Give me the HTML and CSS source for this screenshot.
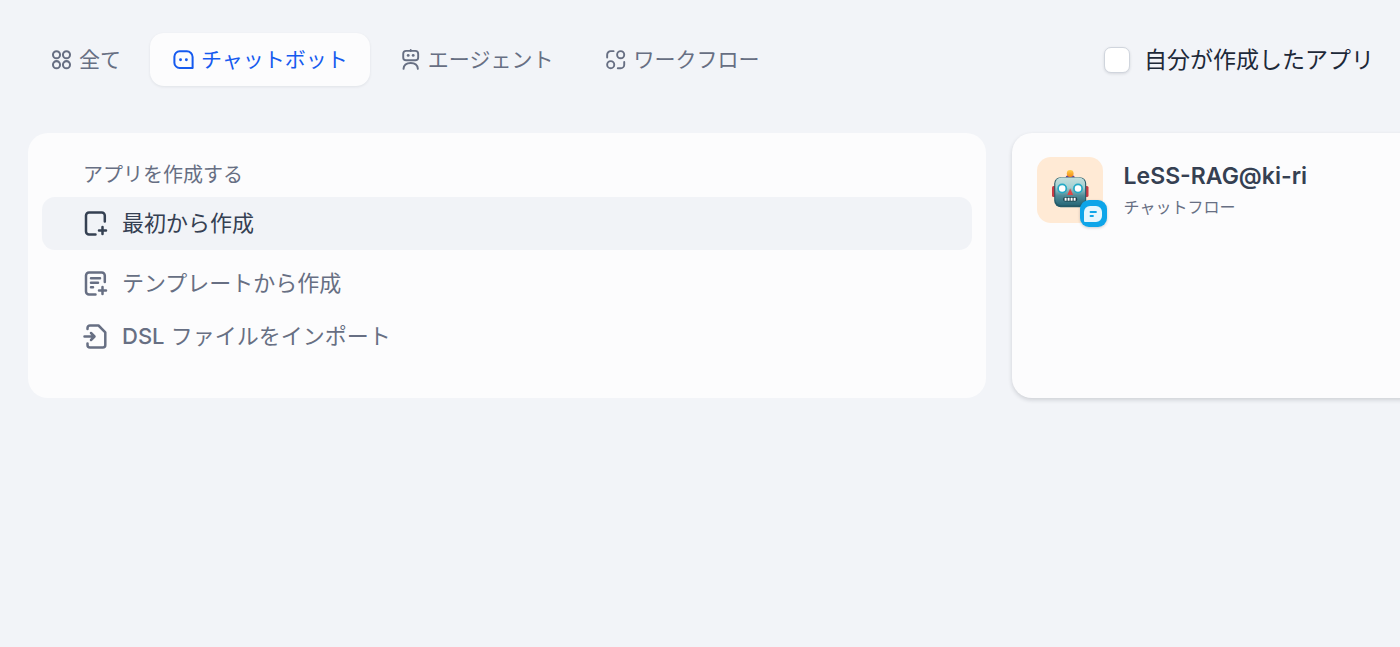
FILE: index.html
```html
<!DOCTYPE html>
<html lang="ja">
<head>
<meta charset="utf-8">
<meta name="viewport" content="width=device-width, initial-scale=1">
<title>アプリ</title>
<link rel="stylesheet" href="styles.css">
</head>
<body>
<div class="page">
  <header class="toolbar">
    <nav class="tabs">
      <button type="button" class="tab">
        <svg class="tab-icon" viewBox="0 0 24 24" fill="none" stroke="currentColor" stroke-width="2.1"><circle cx="6.8" cy="7" r="3.7"/><circle cx="17.2" cy="7" r="3.7"/><circle cx="6.8" cy="17.4" r="3.7"/><circle cx="17.2" cy="17.4" r="3.7"/></svg>
        <span>全て</span>
      </button>
      <button type="button" class="tab tab-active" aria-current="page">
        <svg class="tab-icon" viewBox="0 0 24 24" fill="none" stroke="currentColor" stroke-width="2.1"><path d="M8 3.5h7.500a6 6 0 0 1 6 6V20.800H8a5.500 5.500 0 0 1-5.500-5.500V9A5.500 5.500 0 0 1 8 3.500Z" stroke-linejoin="round"/><circle cx="8.900" cy="12.200" r="1.500" fill="currentColor" stroke="none"/><circle cx="15" cy="12.200" r="1.500" fill="currentColor" stroke="none"/></svg>
        <span>チャットボット</span>
      </button>
      <button type="button" class="tab">
        <svg class="tab-icon" viewBox="0 0 24 24" fill="none" stroke="currentColor" stroke-width="2" stroke-linecap="round"><path d="M12.200 2v1.200"/><rect x="4.400" y="3" width="15.600" height="9.800" rx="3"/><circle cx="9.600" cy="7.700" r="1.500" fill="currentColor" stroke="none"/><circle cx="14.800" cy="7.700" r="1.500" fill="currentColor" stroke="none"/><path d="M4.700 21.800c.3-4 3.300-6.200 7.500-6.200s7.200 2.200 7.500 6.200"/></svg>
        <span>エージェント</span>
      </button>
      <button type="button" class="tab">
        <svg class="tab-icon" viewBox="0 0 24 24" fill="none" stroke="currentColor" stroke-width="2" stroke-linecap="round"><circle cx="17.400" cy="7" r="3.700"/><circle cx="7" cy="17.400" r="3.700"/><path d="M3.300 10V7A3.700 3.700 0 0 1 7 3.300h3M21.100 14.500v2.900a3.700 3.700 0 0 1-3.700 3.700h-3"/></svg>
        <span>ワークフロー</span>
      </button>
    </nav>
    <label class="mine">
      <input type="checkbox" class="mine-box">
      <span>自分が作成したアプリ</span>
    </label>
  </header>

  <main class="cards">
    <section class="card create">
      <h2 class="create-title">アプリを作成する</h2>
      <button type="button" class="item item-active">
        <svg class="item-icon" viewBox="0 0 27 27" fill="none" stroke="currentColor" stroke-width="2.5" stroke-linecap="round" stroke-linejoin="round"><path d="M22.800 11.500V5.500a3 3 0 0 0-3-3H7a3 3 0 0 0-3 3v16a3 3 0 0 0 3 3h6.500M20.500 17v7M17 20.500h7"/></svg>
        <span>最初から作成</span>
      </button>
      <button type="button" class="item">
        <svg class="item-icon" viewBox="0 0 27 27" fill="none" stroke="currentColor" stroke-width="2.5" stroke-linecap="round" stroke-linejoin="round"><path d="M22.800 12V5.500a3 3 0 0 0-3-3H7a3 3 0 0 0-3 3v16a3 3 0 0 0 3 3h6.500M20.500 17v7M17 20.500h7M9 8.200h9M9 12.700h7M9 17.200h2"/></svg>
        <span>テンプレートから作成</span>
      </button>
      <button type="button" class="item">
        <svg class="item-icon" viewBox="0 0 27 27" fill="none" stroke="currentColor" stroke-width="2.5" stroke-linecap="round" stroke-linejoin="round"><path d="M5.500 6V5a2.500 2.500 0 0 1 2.500-2.500h8.500l6.800 6.800V22a2.500 2.500 0 0 1-2.500 2.500H8A2.500 2.500 0 0 1 5.500 22v-1.500M2.500 13.500h9.500M9 10l3.500 3.500L9 17"/></svg>
        <span><span class="latin">DSL</span> ファイルをインポート</span>
      </button>
    </section>

    <article class="card app">
      <div class="avatar">
        <svg class="robot" viewBox="0 0 38 40" aria-hidden="true">
          <defs>
            <linearGradient id="face" x1="0" y1="0" x2="0" y2="1"><stop offset="0" stop-color="#c3dfdc"/><stop offset=".35" stop-color="#a5d0d2"/><stop offset=".65" stop-color="#508c98"/><stop offset="1" stop-color="#286878"/></linearGradient>
            <linearGradient id="bulb" x1="0" y1="0" x2="0" y2="1"><stop offset="0" stop-color="#ffd04a"/><stop offset="1" stop-color="#f28a16"/></linearGradient>
          </defs>
          <rect x="1" y="16" width="5" height="11" rx="1.500" fill="#c93a43"/>
          <rect x="32.500" y="16" width="5" height="11" rx="1.500" fill="#c93a43"/>
          <path d="M14.500 8.500c0-3 2-3.500 4.700-3.500s4.700.5 4.700 3.500Z" fill="#68458b"/>
          <circle cx="19.200" cy="3.500" r="3.400" fill="url(#bulb)"/>
          <rect x="3.200" y="7.200" width="32" height="30" rx="6.500" fill="#245b69"/>
          <rect x="4.300" y="7.600" width="29.800" height="27.700" rx="6" fill="url(#face)"/>
          <circle cx="11.200" cy="18.500" r="4.100" fill="#fff" stroke="#23a9c5" stroke-width="1.700"/>
          <circle cx="27" cy="18.500" r="4.100" fill="#fff" stroke="#23a9c5" stroke-width="1.700"/>
          <path d="M19.200 18.500l3 6.500h-6Z" fill="#df4545"/>
          <rect x="12.200" y="27" width="14" height="4.600" rx="2" fill="#173e49"/>
          <path d="M13.600 29.300h11.200" stroke="#fff" stroke-width="3" stroke-dasharray="2 1"/>
        </svg>
        <span class="badge">
          <svg class="badge-icon" viewBox="0 0 18 16" aria-hidden="true"><path d="M6 0h6a6 6 0 0 1 6 6v4a6 6 0 0 1-6 6H1a1 1 0 0 1-1-1V6a6 6 0 0 1 6-6Z" fill="#e6f6fd"/><path d="M6.500 6H12M6.500 10H9" stroke="#0ea5e9" stroke-width="1.800" stroke-linecap="round"/></svg>
        </span>
      </div>
      <div class="app-info">
        <h3 class="app-name">LeSS-RAG@ki-ri</h3>
        <p class="app-kind">チャットフロー</p>
      </div>
    </article>
  </main>
</div>
</body>
</html>
```

FILE: styles.css
```css
* {
  box-sizing: border-box;
}

body {
  margin: 0;
  min-height: 100vh;
  background: #f2f4f8;
  color: #676f83;
  font-family: Inter, "Noto Sans CJK JP", sans-serif;
}

button {
  margin: 0;
  border: 0;
  background: transparent;
  color: inherit;
  font: inherit;
  text-align: left;
  cursor: pointer;
}

h2, h3, p {
  margin: 0;
}

.page {
  overflow: hidden;
  min-height: 100vh;
  padding: 33px 0 32px 28px;
}

.toolbar {
  display: flex;
  align-items: center;
  justify-content: space-between;
  padding-right: 26px;
}

.tabs {
  display: flex;
  gap: 7px;
}

.tab {
  display: flex;
  align-items: center;
  gap: 6px;
  height: 53px;
  padding: 0 22px;
  border-radius: 14px;
  font-size: 21px;
  line-height: 32px;
  white-space: nowrap;
}

.tab-icon {
  flex: none;
  width: 23px;
  height: 23px;
}

.tab-active {
  background: #fcfcfd;
  color: #155aef;
  box-shadow: 0 1px 3px rgba(16, 24, 40, 0.08);
}

.mine {
  display: flex;
  align-items: center;
  gap: 14px;
  color: #1d2939;
  font-size: 23px;
  line-height: 32px;
  white-space: nowrap;
}

.mine-box {
  appearance: none;
  width: 26px;
  height: 26px;
  margin: 0;
  border: 1px solid #d0d5dd;
  border-radius: 7px;
  background: #fff;
  box-shadow: 0 1px 3px rgba(16, 24, 40, 0.12);
}

.mine-box:checked {
  background: #155aef;
}

.cards {
  display: grid;
  grid-template-columns: 68.4vw 68.4vw;
  gap: 26px;
  margin-top: 47px;
}

.card {
  min-height: 265px;
  border-radius: 20px;
  background: #fcfcfd;
}

.create {
  display: flex;
  flex-direction: column;
  padding: 26px 14px 32px;
}

.create-title {
  padding: 0 41px;
  margin-bottom: 6px;
  font-size: 20px;
  font-weight: 400;
  line-height: 32px;
}

.item {
  display: flex;
  align-items: center;
  gap: 13px;
  height: 53px;
  padding: 0 40px 1px;
  border-radius: 13px;
  font-size: 22px;
  line-height: 32px;
}

.latin {
  font-weight: 500;
}

.item-icon {
  flex: none;
  width: 27px;
  height: 27px;
}

.item-active {
  margin-bottom: 7px;
  background: #f1f3f7;
  color: #354052;
}

.app {
  display: flex;
  align-items: flex-start;
  gap: 21px;
  padding: 24px 25px;
  box-shadow: 0 2px 4px rgba(16, 24, 40, 0.16);
}

.avatar {
  position: relative;
  display: grid;
  place-items: center;
  width: 66px;
  height: 66px;
  border-radius: 14px;
  background: #ffead5;
}

.robot {
  width: 38px;
  height: 40px;
}

.badge {
  position: absolute;
  right: -4px;
  bottom: -4px;
  display: grid;
  place-items: center;
  width: 27px;
  height: 27px;
  border-radius: 9px;
  background: #0ea5e9;
  box-shadow: 0 1px 3px rgba(16, 24, 40, 0.2);
}

.badge-icon {
  width: 18px;
  height: 16px;
}

.app-name {
  color: #354052;
  font-size: 23px;
  font-weight: 600;
  line-height: 38px;
}

.app-kind {
  font-size: 16px;
  line-height: 24px;
}
```
